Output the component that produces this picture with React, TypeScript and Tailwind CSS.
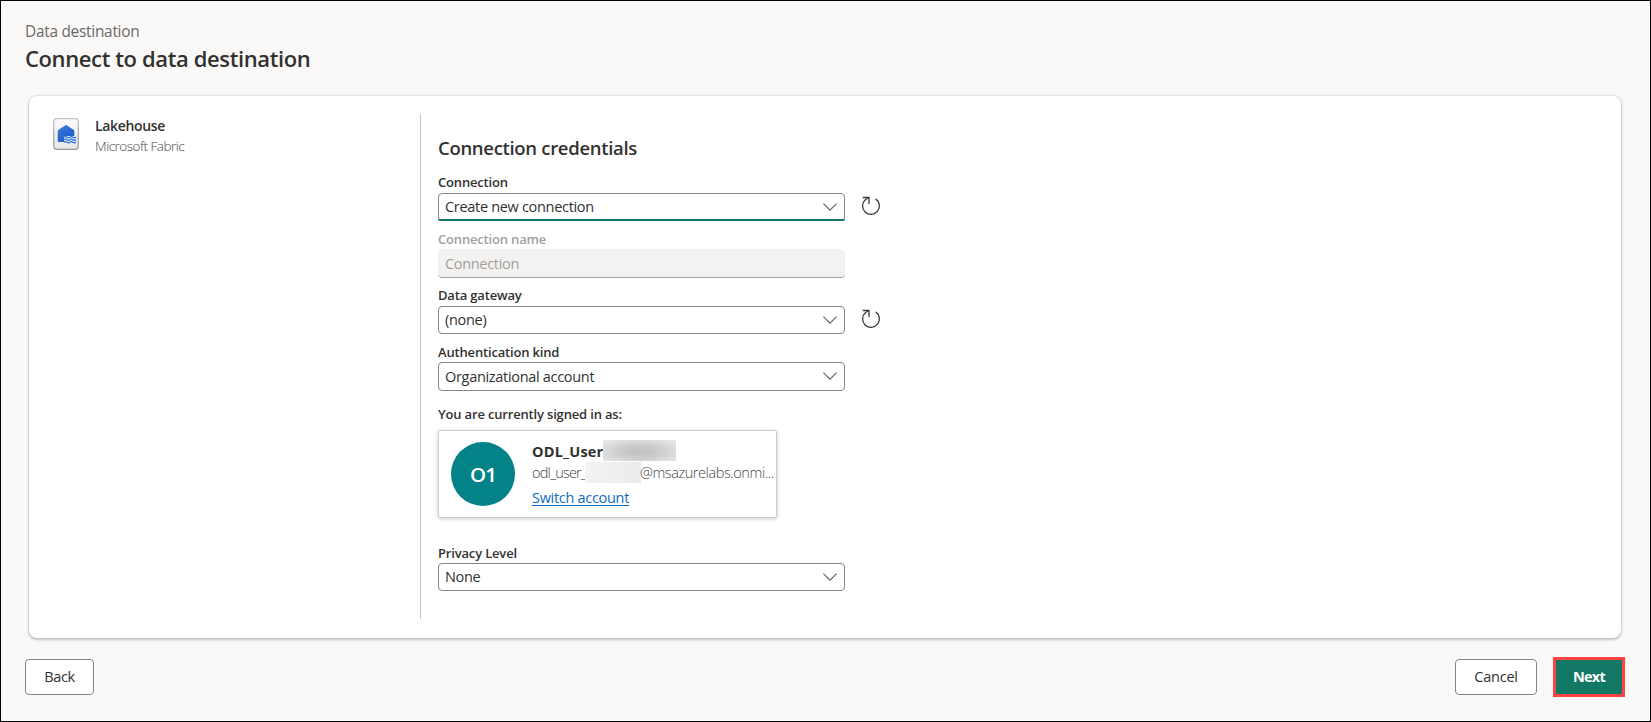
import React from 'react';

function Chevron() {
  return (
    <svg className="mb-px h-2 w-[14px] shrink-0" viewBox="0 0 14 8" fill="none" stroke="#605e5c" strokeWidth="1.1">
      <path d="M0.4 0.6L7 7.2L13.6 0.6" />
    </svg>
  );
}

function Refresh() {
  return (
    <svg className="h-5 w-5" viewBox="0 0 20 20" fill="none" stroke="#3b3a39" strokeWidth="1.3">
      <path d="M14.6 2.9A8.4 8.4 0 1 1 4.6 3.5L7.6 1.5" />
      <path d="M1.8 1.5H8V8" />
    </svg>
  );
}

function LakehouseIcon() {
  return (
    <svg className="h-8 w-[26px] shrink-0" viewBox="0 0 26 32">
      <defs>
        <linearGradient id="tile" x1="0" y1="0" x2="0" y2="1">
          <stop offset="0" stopColor="#fbfbfb" />
          <stop offset="1" stopColor="#e6e6e6" />
        </linearGradient>
        <linearGradient id="edge" x1="0" y1="0" x2="0" y2="1">
          <stop offset="0" stopColor="#c4c4c4" />
          <stop offset="1" stopColor="#979797" />
        </linearGradient>
        <linearGradient id="house" x1="0" y1="0" x2="1" y2="1">
          <stop offset="0" stopColor="#3a7be0" />
          <stop offset="1" stopColor="#1a55bf" />
        </linearGradient>
      </defs>
      <rect x="0.7" y="0.7" width="24.6" height="30.6" rx="3" fill="url(#tile)" stroke="url(#edge)" strokeWidth="1.3" />
      <path
        d="M12.1 7.4Q13 6.8 13.9 7.4L20.4 11.8Q21.3 12.4 21.3 13.5V18.2H11.8Q11.1 18.2 11.1 19V24H5.9Q4.7 24 4.7 22.8V13.5Q4.7 12.4 5.6 11.8Z"
        fill="url(#house)"
      />
      <path d="M11 18h11.8v7H11z" fill="#dfe9f8" />
      <g fill="none" stroke="#3273d6" strokeWidth="1.3">
        <path d="M11 19.3q1.5-1.2 3 0t3 0t3 0t3-.2" />
        <path d="M11 21.8q1.5-1.2 3 0t3 0t3 0t3-.2" />
        <path d="M11 24.3q1.5-1.2 3 0t3 0t3 0t3-.2" />
      </g>
    </svg>
  );
}

const labelClass = 'h-[19px] text-[13px] font-semibold tracking-[-0.17px]';

type SelectProps = {
  label: string;
  value: string;
  box: string;
  leading: string;
  refresh?: boolean;
  focused?: boolean;
};

function SelectField({ label, value, box, leading, refresh, focused }: SelectProps) {
  return (
    <div>
      <div className={`${labelClass} ${leading} text-[#323130]`}>{label}</div>
      <div className="flex">
        <div
          className={`relative flex w-[407px] items-center justify-between rounded-[4px] border border-[#858585] pr-[7px] pl-1.5 text-[14.5px] tracking-[-0.31px] text-[#323130] ${box}`}
        >
          <span className="leading-5">{value}</span>
          <Chevron />
          {focused && <span className="absolute -inset-x-px -bottom-px h-0.5 rounded-b-[3px] bg-[#117865]" />}
        </div>
        {refresh && (
          <button className="ml-4 flex items-center pb-[3px]" aria-label="Refresh">
            <Refresh />
          </button>
        )}
      </div>
    </div>
  );
}

export default function App() {
  return (
    <div className="flex h-[722px] w-[1651px] flex-col border border-black bg-[#faf9f8] font-['Open_Sans','Noto_Sans',sans-serif] text-[#323130]">
      <header className="pt-[19px] pl-[24px]">
        <div className="h-6 text-[15.4px] leading-6 tracking-[-0.26px] text-[#6b6967]">Data destination</div>
        <h1 className="h-[29px] text-[22px] leading-[28px] font-semibold tracking-[-0.38px]">Connect to data destination</h1>
      </header>

      <main className="mt-[23px] ml-[28px] flex h-[542px] w-[1592px] rounded-lg bg-white pt-[18px] shadow-[0_0_3px_rgba(0,0,0,0.24),0_2px_3px_rgba(0,0,0,0.18)]">
        <aside className="flex h-[505px] w-[392px] items-start border-r border-[#c8c6c4] pl-6">
          <div className="flex pt-1">
            <LakehouseIcon />
            <div className="-mt-[3px] ml-4">
              <div className="text-[14px] leading-[22px] font-semibold tracking-[-0.33px]">Lakehouse</div>
              <div className="text-[13.5px] leading-[18px] font-light tracking-[-0.5px] text-[#484644]">Microsoft Fabric</div>
            </div>
          </div>
        </aside>

        <section className="pt-[22px] pl-[17px]">
          <h2 className="mb-[14px] text-[18.5px] leading-6 font-semibold tracking-[-0.31px]">Connection credentials</h2>

          <div className="flex flex-col gap-[9px]">
            <SelectField label="Connection" value="Create new connection" box="h-7" leading="leading-[17px]" refresh focused />
            <div>
              <div className={`${labelClass} leading-[19px] text-[#a19f9d]`}>Connection name</div>
              <div className="flex h-[29px] w-[407px] items-center rounded-[4px] border-b border-[#a3a1a0] bg-[#f3f2f1] pt-px pl-[7px] text-[14.5px] leading-5 tracking-[-0.32px] text-[#a19f9d]">
                Connection
              </div>
            </div>
            <SelectField label="Data gateway" value="(none)" box="h-7" leading="leading-[17px]" refresh />
            <SelectField label="Authentication kind" value="Organizational account" box="h-[29px]" leading="leading-[19px]" />
          </div>

          <div className={`${labelClass} mt-[14px] leading-[19px]`}>You are currently signed in as:</div>
          <div className="mt-[6px] flex h-[88px] w-[339px] rounded-[2px] border border-[#cccccc] pt-[9px] pl-3 shadow-[0_1px_4px_rgba(0,0,0,0.2)]">
            <div className="mt-0.5 flex size-16 shrink-0 items-center justify-center rounded-full bg-[#038387] text-[20.5px] font-semibold tracking-[-1px] text-white">
              O1
            </div>
            <div className="ml-[17px]">
              <div className="flex h-[22px] items-start">
                <span className="text-[14.5px] leading-[24px] font-bold tracking-[0.2px]">ODL_User</span>
                <span className="h-[21px] w-[73px] bg-[radial-gradient(ellipse_at_50%_55%,#c4c4c4_15%,#cfcfcf_45%,#ececec_100%)]" />
              </div>
              <div className="flex h-[22px] items-start text-[14.5px] leading-[21px] font-light text-[#484644]">
                <span className="w-[53px] tracking-[-0.8px]">odl_user_</span>
                <span className="h-[21px] w-14 bg-gradient-to-r from-[#f3f3f3] to-[#ebebeb]" />
                <span className="-ml-px tracking-[-0.42px]">@msazurelabs.onmi...</span>
              </div>
              <a className="block pt-[3px] text-[14.5px] leading-[22px] tracking-[-0.3px] text-[#0f6cbd] underline underline-offset-[1.5px]">
                Switch account
              </a>
            </div>
          </div>

          <div className="mt-[26px]">
            <SelectField label="Privacy Level" value="None" box="h-7" leading="leading-[19px]" />
          </div>
        </section>
      </main>

      <footer className="mt-[19px] flex items-center pr-[25px] pl-[24px] text-[14.5px]">
        <button className="h-9 w-[69px] rounded-[4px] border border-[#858585] bg-white font-medium tracking-[-0.37px]">Back</button>
        <button className="mr-4 ml-auto h-9 w-[82px] rounded-[4px] border border-[#858585] bg-white font-medium tracking-[-0.22px]">Cancel</button>
        <button className="h-10 w-[72px] border-[3px] border-[#ff4343] bg-[#117865] font-bold tracking-[-0.7px] text-white">Next</button>
      </footer>
    </div>
  );
}
